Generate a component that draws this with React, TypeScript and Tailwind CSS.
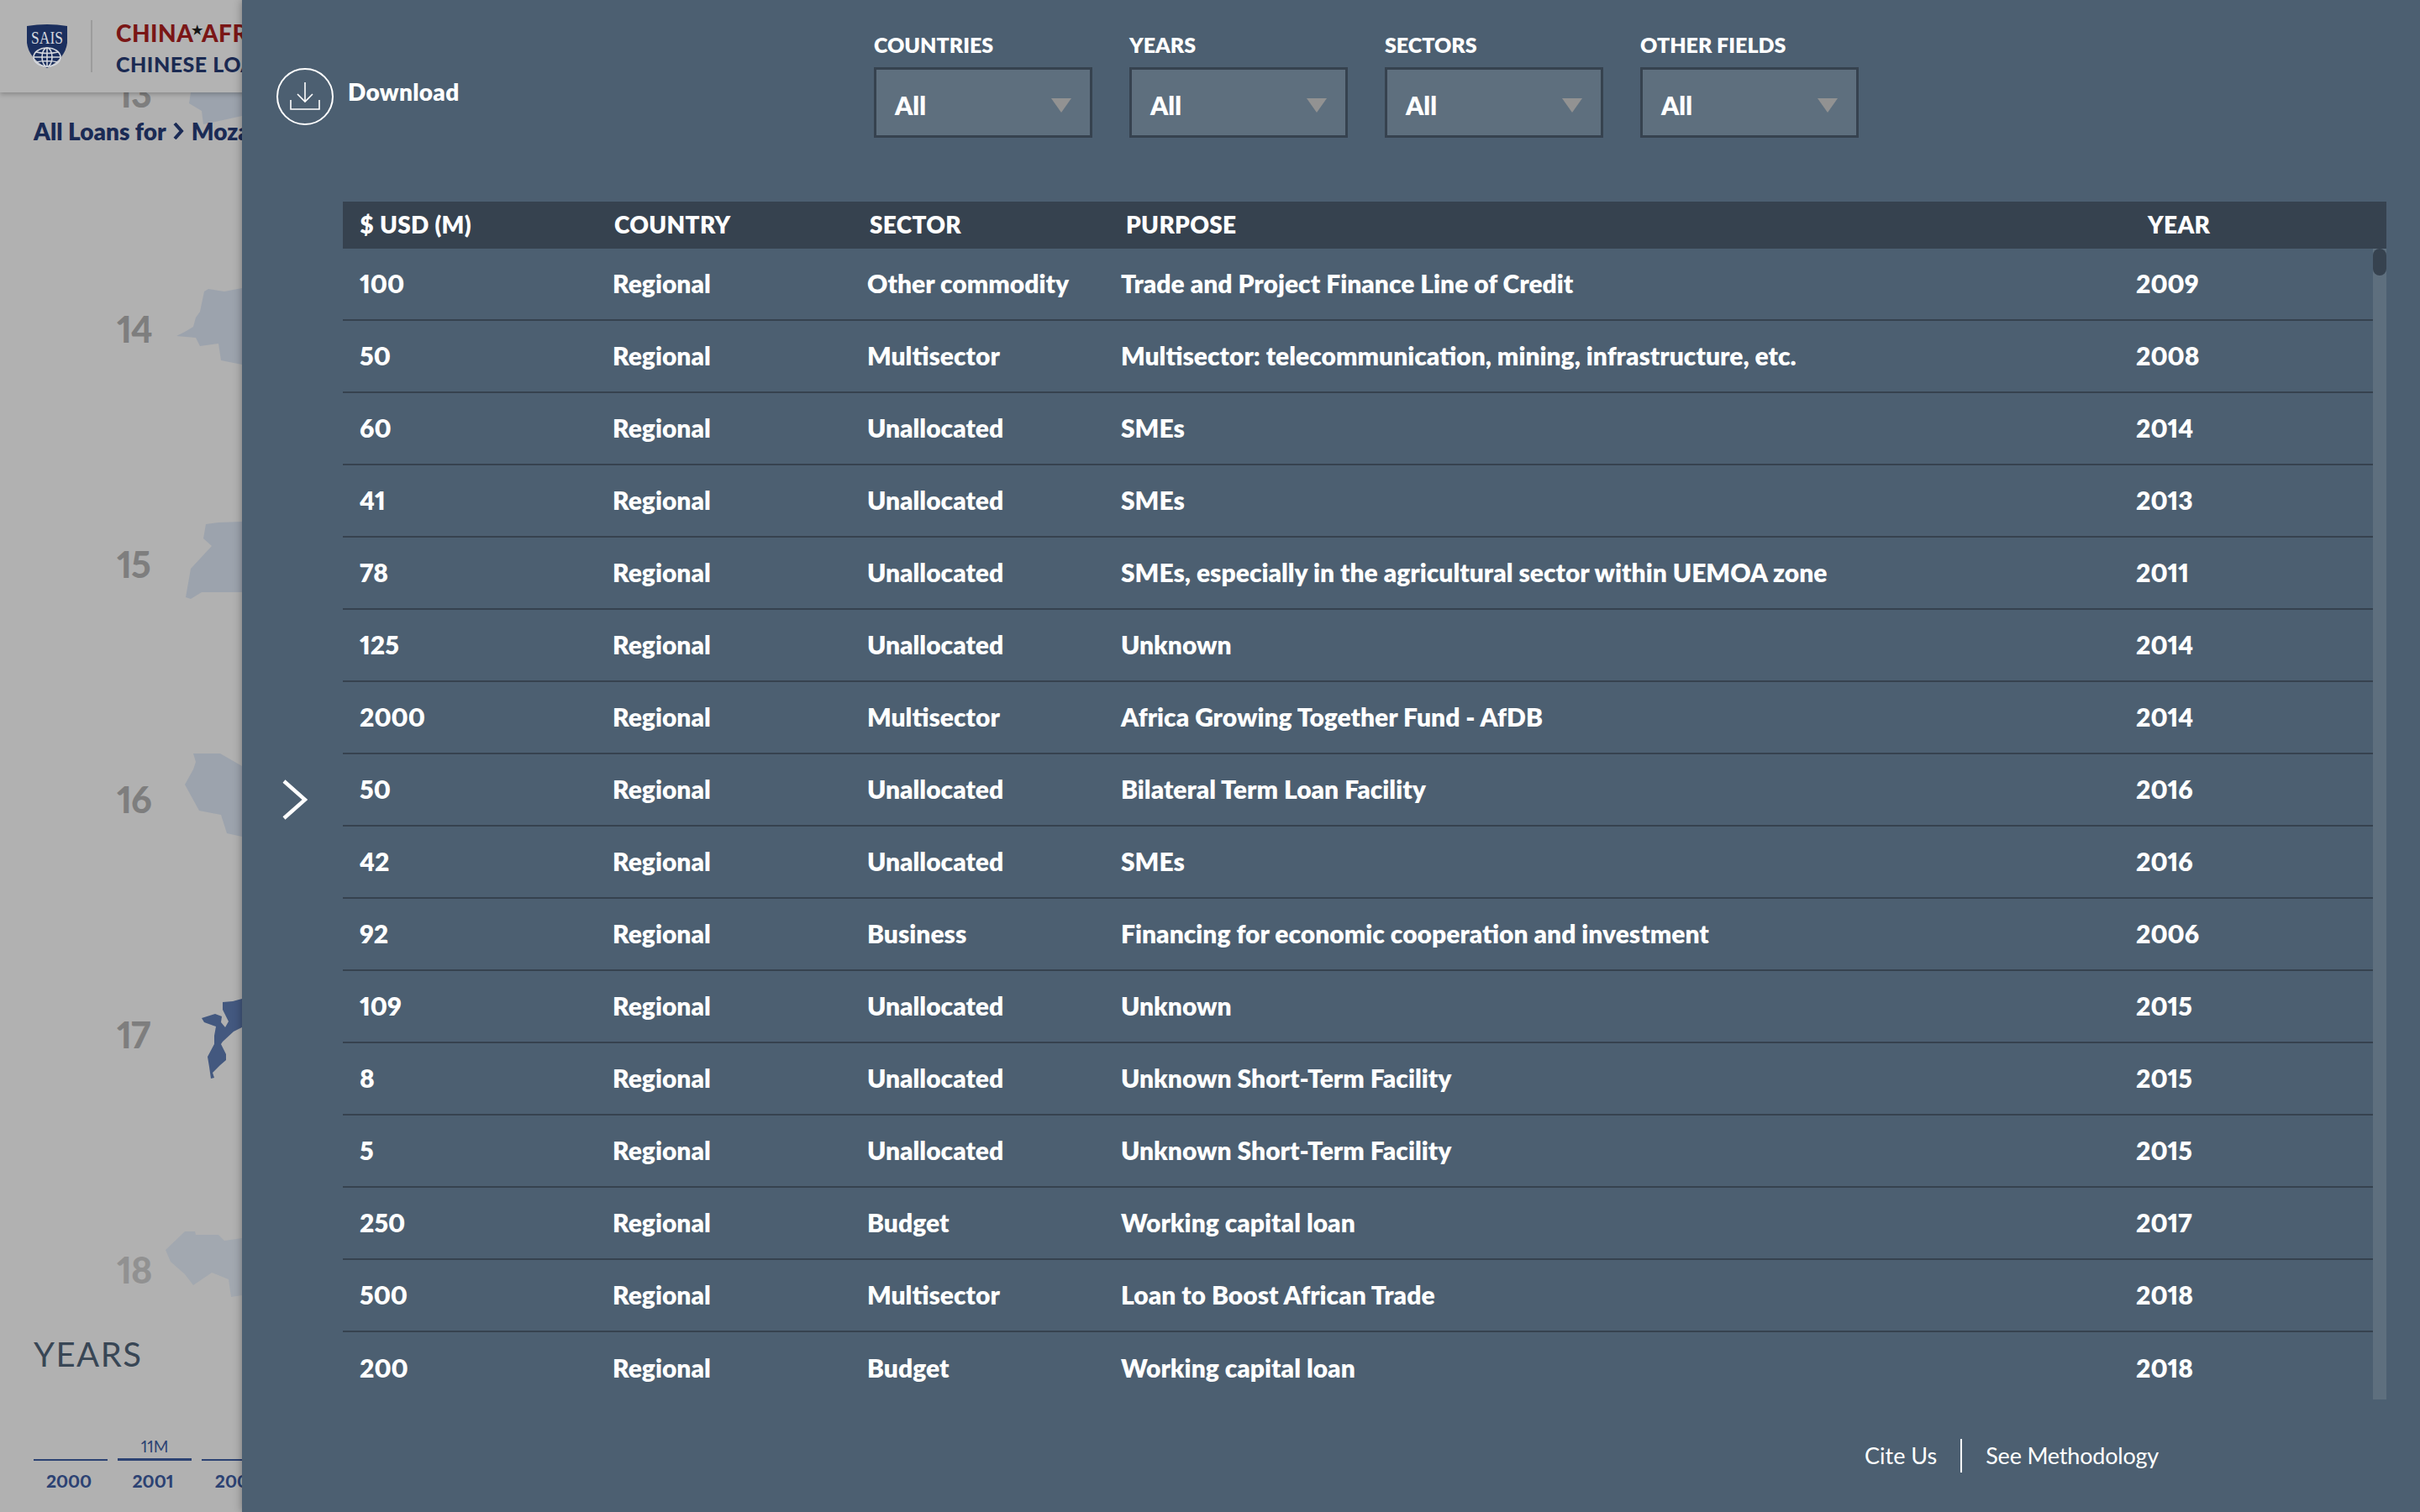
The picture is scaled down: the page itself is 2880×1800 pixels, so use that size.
const rows: [string, string, string, string][] = [
  ["100", "Other commodity", "Trade and Project Finance Line of Credit", "2009"],
  ["50", "Multisector", "Multisector: telecommunication, mining, infrastructure, etc.", "2008"],
  ["60", "Unallocated", "SMEs", "2014"],
  ["41", "Unallocated", "SMEs", "2013"],
  ["78", "Unallocated", "SMEs, especially in the agricultural sector within UEMOA zone", "2011"],
  ["125", "Unallocated", "Unknown", "2014"],
  ["2000", "Multisector", "Africa Growing Together Fund - AfDB", "2014"],
  ["50", "Unallocated", "Bilateral Term Loan Facility", "2016"],
  ["42", "Unallocated", "SMEs", "2016"],
  ["92", "Business", "Financing for economic cooperation and investment", "2006"],
  ["109", "Unallocated", "Unknown", "2015"],
  ["8", "Unallocated", "Unknown Short-Term Facility", "2015"],
  ["5", "Unallocated", "Unknown Short-Term Facility", "2015"],
  ["250", "Budget", "Working capital loan", "2017"],
  ["500", "Multisector", "Loan to Boost African Trade", "2018"],
  ["200", "Budget", "Working capital loan", "2018"],
];

const maps: { n: string; c: number; fill: string; num: string; pts: string }[] = [
  { n: "13", c: 111, fill: "#9ca3ad", num: "#7e7e7e", pts: "227,110 225,123 240,132 242,148 288,138 288,110" },
  { n: "14", c: 391, fill: "#9ca3ad", num: "#7e7e7e", pts: "210,400 220,395 230,389 233,378 238,371 243,347 248,344 267,347 288,343 288,434 263,429 260,409 238,412 233,402" },
  { n: "15", c: 671, fill: "#9ca3ad", num: "#7e7e7e", pts: "245,624 260,622 288,621 288,705 240,705 227,713 221,711 227,677 252,650 242,641" },
  { n: "16", c: 951, fill: "#9ca3ad", num: "#7e7e7e", pts: "230,897 262,897 288,912 288,996 270,992 263,970 237,965 220,934 230,916 233,907" },
  { n: "17", c: 1231, fill: "#43587f", num: "#7e7e7e", pts: "240,1212 256,1207 264,1210 263,1217 268,1223 272,1216 265,1202 265,1193 277,1192 288,1189 288,1223 278,1228 265,1240 263,1243 269,1255 269,1262 262,1268 253,1277 255,1283 251,1284 249,1270 247,1258 255,1243 255,1233 257,1222 243,1217" },
  { n: "18", c: 1511, fill: "#a2a8b0", num: "#919191", pts: "197,1488 220,1466 232,1466 233,1470 260,1470 267,1477 288,1474 288,1542 275,1544 272,1523 252,1515 230,1530 220,1517 203,1502" },
];

const years = Array.from({ length: 18 }, (_, i) => String(2000 + i));

function Select({ label }: { label: string }) {
  return (
    <div className="flex w-[260px] flex-col">
      <div className="mb-[15px] h-[24px] text-[25px] leading-[24px] font-[800] text-white">{label}</div>
      <div className="flex h-[84px] items-center justify-between border-[3px] border-[#36424f] bg-[#5e6f7e] pt-[6px] pr-[22px] pl-[22px]">
        <span className="text-[30px] font-[800] text-white">All</span>
        <span className="h-0 w-0 border-x-[12px] border-t-[17px] border-x-transparent border-t-[#929292]" />
      </div>
    </div>
  );
}

function Shield() {
  return (
    <svg width="48" height="52" viewBox="0 0 48 52">
      <path d="M0 2 Q24 -2 48 2 L48 22 Q46 40 24 52 Q2 40 0 22 Z" fill="#1b2f5e" />
      <text x="24" y="23" textAnchor="middle" fill="#d4d7de" fontSize="22" fontFamily="'Liberation Serif', serif" textLength="38" lengthAdjust="spacingAndGlyphs">SAIS</text>
      <g fill="none" stroke="#d4d7de" strokeWidth="1.6">
        <ellipse cx="24" cy="39" rx="16" ry="11" />
        <ellipse cx="24" cy="39" rx="6" ry="11" />
        <path d="M24 28 V50 M11 33 Q24 36 37 33 M8 39 H40 M11 45 Q24 42 37 45" />
      </g>
    </svg>
  );
}

export default function App() {
  return (
    <div className="relative h-[1800px] w-[2880px] overflow-hidden bg-[#b1b1b1] font-['Lato',sans-serif] [font-variant-numeric:proportional-nums]">
      <div className="relative z-10 flex h-[110px] items-center bg-[#b3b3b3] pl-[32px] shadow-[0_2px_6px_rgba(0,0,0,0.25)]">
        <Shield />
        <div className="mx-[28px] h-[62px] w-[2px] bg-[#9c9c9c]" />
        <div className="pt-[4px] whitespace-nowrap">
          <div className="h-[38px] text-[28px] leading-[38px] font-black tracking-[0.5px] text-[#7a1616]">
            CHINA<span className="relative -top-[9px] -mx-[2px] text-[15px] text-[#151515]">★</span>AFRICA RESEARCH INITIATIVE
          </div>
          <div className="text-[25px] leading-[36px] font-black tracking-[0.5px] text-[#1b2a52]">CHINESE LOANS TO AFRICA</div>
        </div>
      </div>

      <div className="absolute top-[140px] left-[40px] z-10 flex items-center gap-[8px] text-[28px] leading-[32px] font-[800] whitespace-nowrap text-[#1b2b55]">
        <span>All Loans for</span>
        <svg width="14" height="20" viewBox="0 0 14 20" fill="none" stroke="#1b2b55" strokeWidth="4">
          <path d="M2 1 L10 10 L2 19" />
        </svg>
        <span>Mozambique</span>
      </div>

      <div className="-mt-[49px] flex flex-col gap-[180px] pl-[139px]">
        {maps.map((m) => (
          <div key={m.n} className="flex h-[100px] items-center">
            <div className="w-[51px] text-[43px] leading-none font-black tracking-[-1px]" style={{ color: m.num }}>{m.n}</div>
            <svg width="98" height="140" viewBox={`190 ${m.c - 70} 98 140`} className="-my-[20px] shrink-0">
              <polygon points={m.pts} fill={m.fill} />
            </svg>
          </div>
        ))}
      </div>

      <div className="mt-[31px] pl-[40px] text-[40px] leading-[40px] tracking-[1.5px] text-[#384655]">YEARS</div>

      <div className="mt-[76px] flex gap-[12px] pl-[40px]">
        {years.map((y) => (
          <div key={y} className="flex w-[88px] shrink-0 flex-col items-center">
            <div className="flex h-[26px] items-center text-[19px] leading-none text-[#2c4273]">{y === "2001" ? "11M" : ""}</div>
            <div className={y === "2001" ? "mt-[2px] h-[3px] w-full bg-[#2c4273]" : "mt-[3px] h-[2px] w-full bg-[#2c4273]"} />
            <div className="mt-[12px] -translate-x-[2px] text-[21px] leading-[24px] font-black text-[#2c4273]">{y}</div>
          </div>
        ))}
      </div>

      <div className="absolute inset-y-0 right-0 left-[288px] z-20 flex flex-col bg-[#4c5f71] text-white shadow-[0_0_10px_rgba(0,0,0,0.35)]">
        <div className="flex h-[240px] shrink-0 pl-[41px]">
          <div className="flex h-[149px] w-[711px] items-end">
            <div className="flex items-center">
              <div className="flex h-[68px] w-[68px] items-center justify-center rounded-full border-2 border-white">
                <svg width="36" height="36" viewBox="0 0 36 36" fill="none" stroke="white" strokeWidth="1.6">
                  <path d="M18 1 V24 M9 15 L18 24 L27 15 M1 22 V33 H35 V22" />
                </svg>
              </div>
              <div className="-mt-[12px] ml-[17px] text-[28px] font-[800] tracking-[0.3px]">Download</div>
            </div>
          </div>
          <div className="flex gap-[44px] pt-[41px]">
            {["COUNTRIES", "YEARS", "SECTORS", "OTHER FIELDS"].map((l) => (
              <Select key={l} label={l} />
            ))}
          </div>
        </div>

        <div className="mr-[40px] ml-[120px] flex min-h-0 flex-col">
          <div className="flex h-[56px] shrink-0 items-center bg-[#36424f] pb-[2px] pl-[20px] text-[28px] font-[800] tracking-[0.3px] whitespace-nowrap">
            <div className="w-[303px]">$ USD (M)</div>
            <div className="w-[304px]">COUNTRY</div>
            <div className="w-[305px]">SECTOR</div>
            <div className="w-[1216px]">PURPOSE</div>
            <div>YEAR</div>
          </div>
          <div className="flex h-[1370px]">
            <div className="min-w-0 flex-1 overflow-hidden">
              {rows.map((r, i) => (
                <div key={i} className="flex h-[86px] items-center border-b-2 border-[#36424f] pb-[1px] pl-[20px] text-[30px] font-[800] whitespace-nowrap last:border-b-0">
                  <div className="w-[301px]">{r[0]}</div>
                  <div className="w-[303px]">Regional</div>
                  <div className="w-[302px]">{r[1]}</div>
                  <div className="w-[1208px]">{r[2]}</div>
                  <div>{r[3]}</div>
                </div>
              ))}
            </div>
            <div className="w-[16px] shrink-0 bg-[#5e6f7e]">
              <div className="h-[32px] rounded-[8px] bg-[#36424f]" />
            </div>
          </div>
        </div>

        <div className="mt-[47px] flex items-center pl-[1931px] text-[27px] leading-[40px] whitespace-nowrap">
          <span>Cite Us</span>
          <span className="mx-[28px] h-[40px] w-[2px] bg-white" />
          <span className="tracking-[-0.2px]">See Methodology</span>
        </div>

        <svg width="30" height="50" viewBox="0 0 30 50" fill="none" stroke="white" strokeWidth="4.5" className="absolute top-[927px] left-[48px]">
          <path d="M2 3 L27 25 L2 47" />
        </svg>
      </div>
    </div>
  );
}
